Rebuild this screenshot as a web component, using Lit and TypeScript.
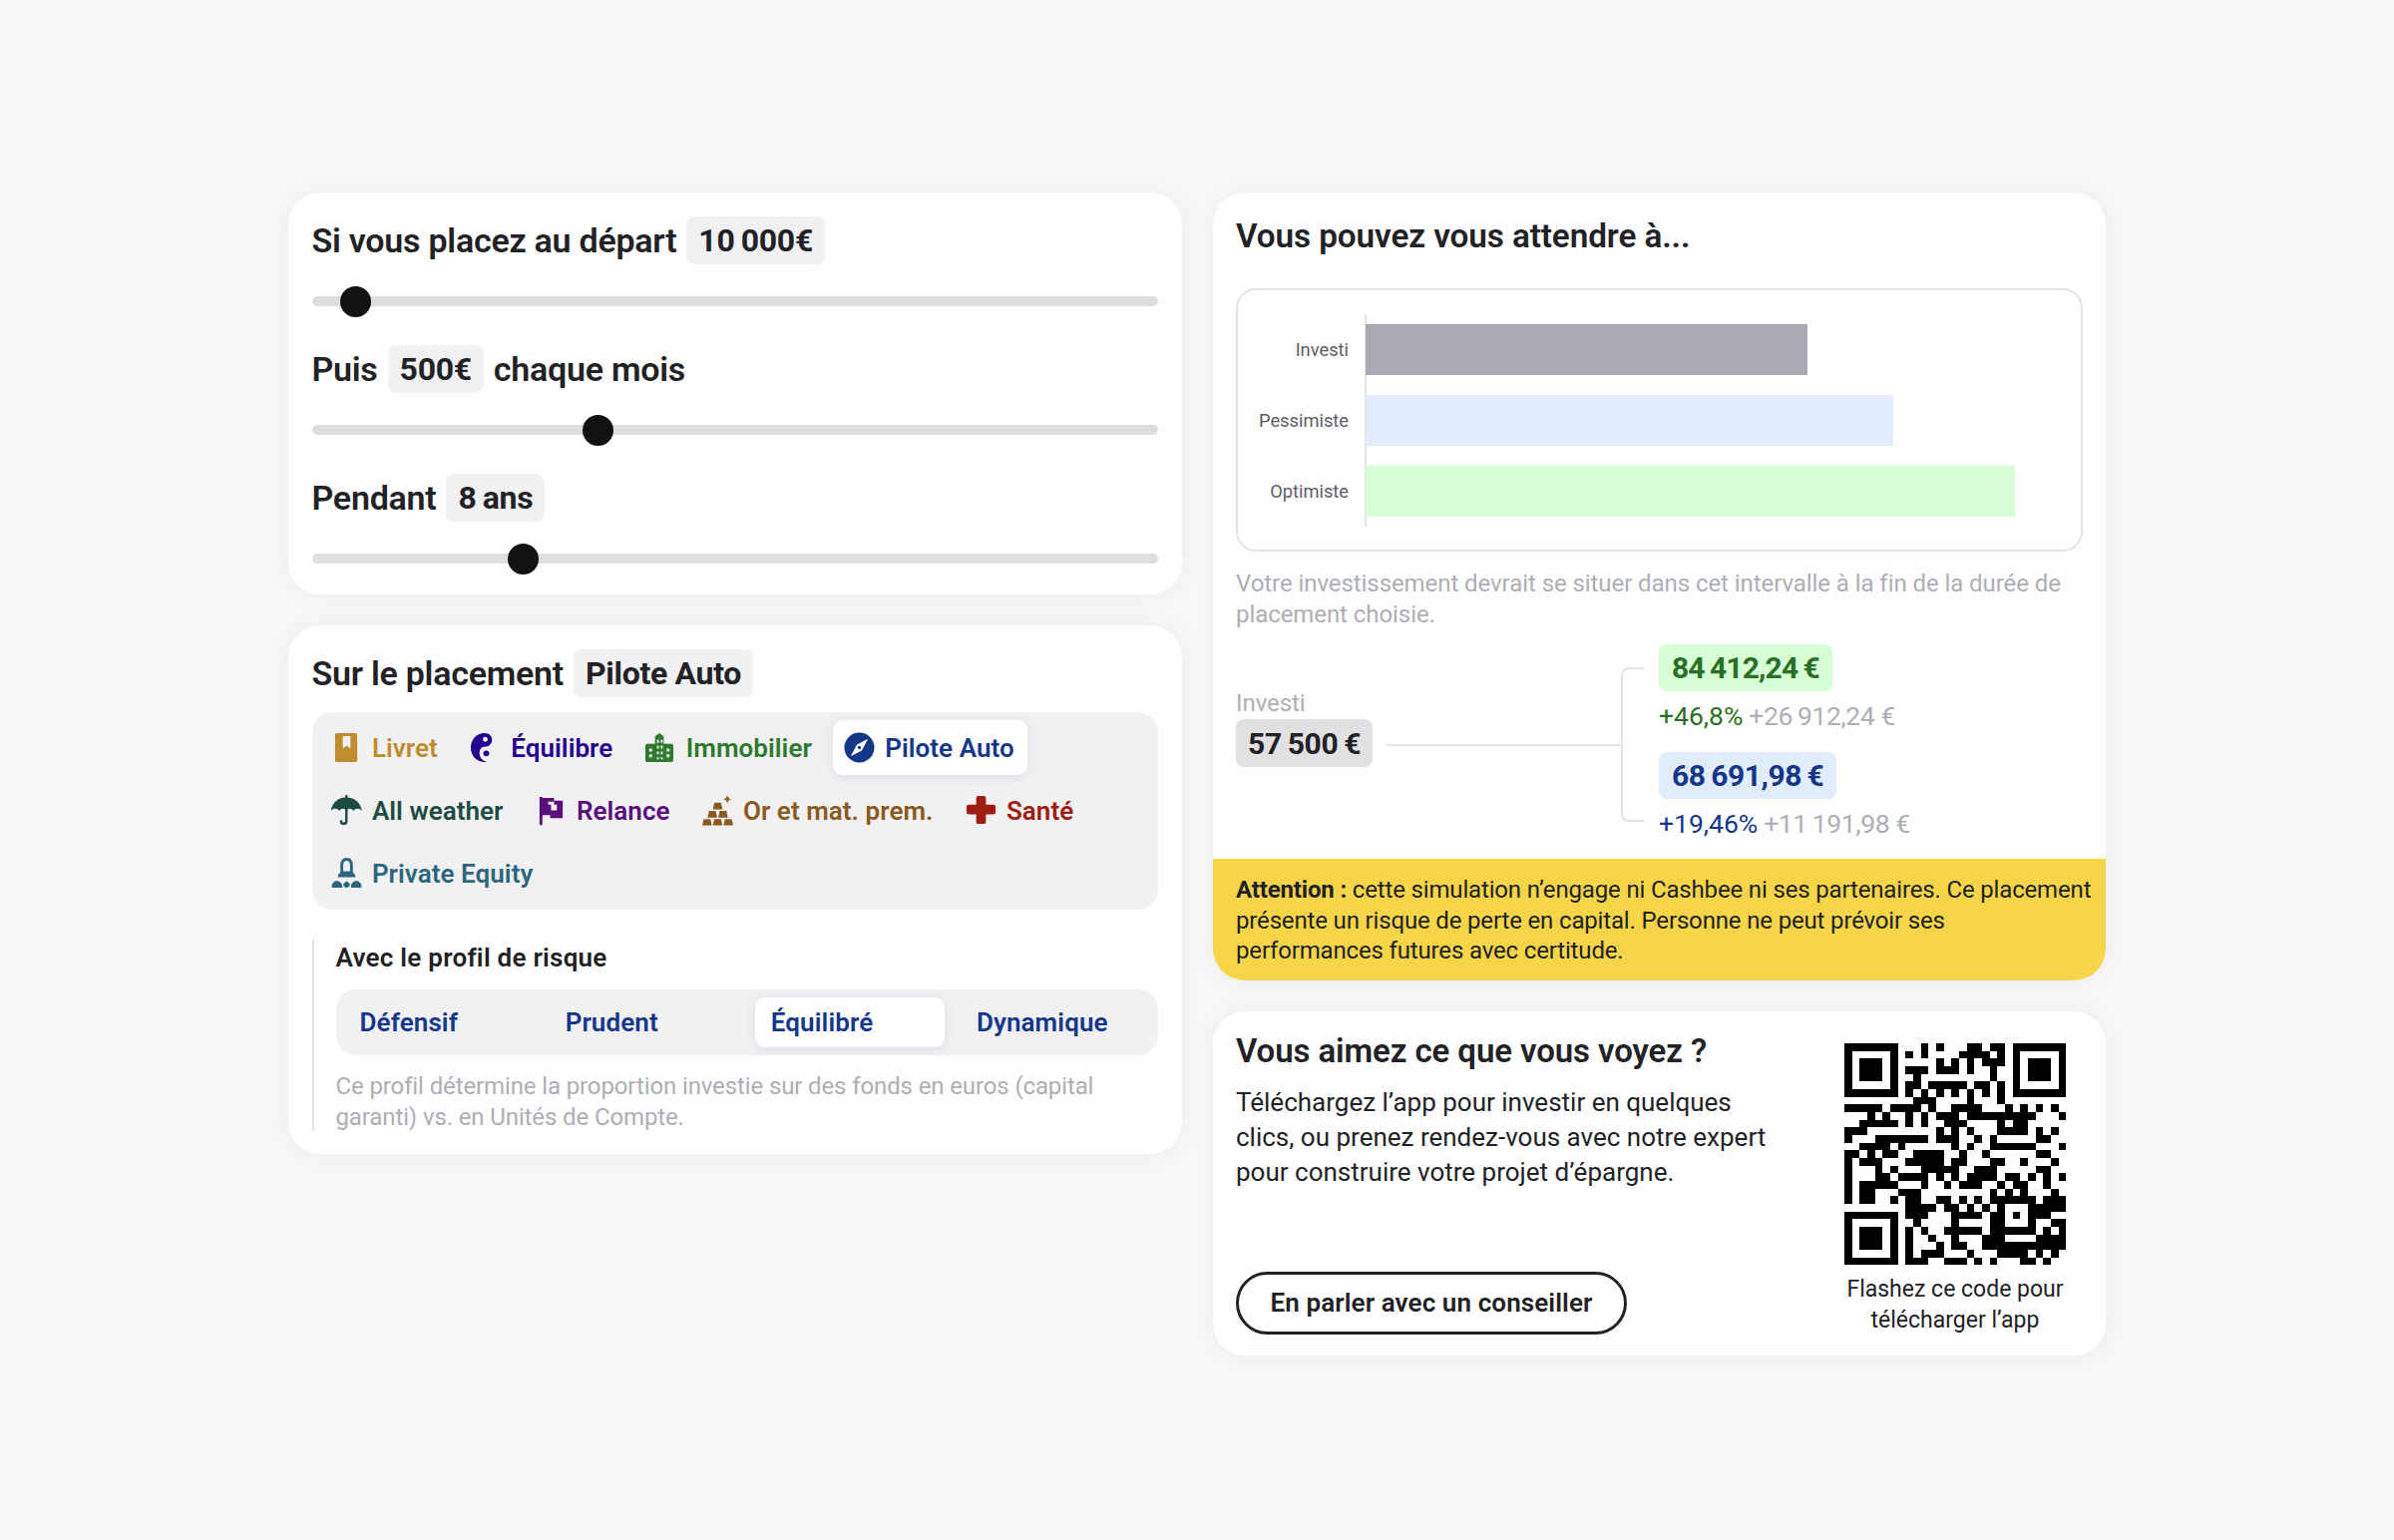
import { LitElement, html, css, svg } from "lit";
import { customElement } from "lit/decorators.js";

const QR_ROWS: number[][] = [
  [10,12,16,17,19,20],[8,10,15,16,17,18,20],[12,14,16,18,19,20],[8,9,10,12,13,14,16,19],[9,19],
  [8,9,11,12,13,14,15,17,18,20],[8,10,12,14,16,18,20],[9,10,11,16,20],
  [0,1,2,3,4,6,7,8,9,11,14,15,16,17,21,23,25,27],
  [3,5,8,10,12,13,14,16,17,18,19,20,21,22,23,24,28],
  [2,3,4,5,6,8,10,13,14,15,20,22,23],
  [0,1,2,12,14,16,20,21,22,23,25,27],
  [0,4,5,6,7,8,9,10,12,13,14,17,19,25,26],
  [2,3,4,5,7,14,16,19,20,21,22,23,24,28],
  [0,1,3,5,6,9,10,11,12,15,18,25,26],
  [0,2,3,4,8,9,10,11,12,14,15,19,20,23,27],
  [0,4,6,10,11,12,13,14,17,18,19,25,26],
  [0,4,5,7,8,9,10,12,14,16,17,18,19,21,22,24,26,28],
  [0,2,3,4,5,6,10,13,15,16,17,20,22,23,26],
  [0,2,3,7,8,9,19,21,23,27],
  [0,2,3,6,8,9,12,13,15,17,19,20,21,22,23,24,26,27,28],
  [8,9,10,11,13,14,16,18,20,24,25,26,27,28],
  [8,9,10,14,15,16,17,19,20,22,24,25,26],
  [9,14,19,20,24,27,28],
  [8,10,13,14,15,16,17,19,20,21,22,23,24,26,28],
  [8,11,14,18,19,20,25,26,27,28],
  [8,12,14,15,18,19,20,21,22,23,24,25,26,27,28],
  [8,10,11,12,16,20,21,22,23,25,27],
  [8,9,10,13,14,15,17,19,23,24,26],
];
const finder = (x: number, y: number) =>
  `M${x} ${y}h7v7h-7zM${x + 1} ${y + 1}v5h5v-5zM${x + 2} ${y + 2}h3v3h-3z`;
const qrPath =
  finder(0, 0) + finder(22, 0) + finder(0, 22) +
  QR_ROWS.map((cols, r) => cols.map((c) => `M${c} ${r}h1v1h-1z`).join("")).join("");

const ICONS = {
  livret: svg`<path fill-rule="evenodd" d="M6 1h19a2 2 0 0 1 2 2v26a2 2 0 0 1-2 2H6a2 2 0 0 1-2-2V3a2 2 0 0 1 2-2zm6 3v13l4-3 4 3V4z"/>`,
  equilibre: svg`<path fill-rule="evenodd" d="M15 1c5 0 8 3 8 7 0 4-3 7-7 7-4 0-6 3-6 7 0 4 3 8 8 9C9 32 1 26 1 16 1 8 7 1 15 1zm1 4a2.500 2.500 0 1 0 0 5 2.500 2.500 0 0 0 0-5z"/><circle cx="17" cy="22" r="3"/>`,
  immo: svg`<path fill-rule="evenodd" d="M15.500 1l4.500 3.500V12h8a2 2 0 0 1 2 2v15a2 2 0 0 1-2 2H3a2 2 0 0 1-2-2V14a2 2 0 0 1 2-2h8V4.500zM13 8v3h2V8zm4 0v3h2V8zm-4 6v3h2v-3zm4 0v3h2v-3zM5 17v3h3v-3zm18 0v3h3v-3zm-10 3v3h2v-3zm4 0v3h2v-3zM5 23v3h3v-3zm18 0v3h3v-3zm-10 3v2h2v-2zm4 0v2h2v-2z"/>`,
  compass: svg`<path fill-rule="evenodd" d="M16 .500a15.500 15.500 0 1 1 0 31 15.500 15.500 0 0 1 0-31zM25 7l-11.500 6L7 25l11.500-6zM16 14.200a1.800 1.800 0 1 0 0 3.600 1.800 1.800 0 0 0 0-3.600z"/>`,
  umbrella: svg`<path d="M15 0h2v2.500c8 .5 13.500 6 15 14-2.500-3-7-3-9 0-1.500-2.500-4.500-3-6-1.500V27a4 4 0 0 1-8 0v-1h2.500v1a1.500 1.500 0 0 0 3 0V15c-2-1.500-4.500-1-6 1.500-2-3-6.500-3-9 0 1.500-8 7-13.500 15-14z"/>`,
  flag: svg`<path fill-rule="evenodd" d="M4 2h3v28a1.500 1.500 0 0 1-3 0zm3 1h12v3h9v18H15v-3H7zm6 4v3h3v6h6v-6h-3v-3z"/>`,
  gold: svg`<path d="M12.500 8h7l1.500 7H11zM7 16.500h7l1.500 7h-10zM18 16.500h7l1.500 7h-10zM1.500 25h7l1.500 6.500H0zM12.500 25h7l1.500 6.500H11zM23.500 25h7l1.500 6.500H22zM26 0c.6 3 1.500 3.900 4.500 4.500-3 .6-3.900 1.500-4.500 4.500-.6-3-1.500-3.900-4.500-4.500C24.500 3.900 25.400 3 26 0z"/>`,
  cross: svg`<path d="M11 3a2 2 0 0 1 2-2h6a2 2 0 0 1 2 2v7h8a2 2 0 0 1 2 2v6a2 2 0 0 1-2 2h-8v8a2 2 0 0 1-2 2h-6a2 2 0 0 1-2-2v-8H3a2 2 0 0 1-2-2v-6a2 2 0 0 1 2-2h8z"/>`,
  bell: svg`<path fill-rule="evenodd" d="M16 0c4.500 0 6.500 3.500 6.500 8v7l2.500 3v2H7v-2l2.500-3V8C9.500 3.500 11.500 0 16 0zm0 3c-2.500 0-3.500 2-3.500 5v6h7V8c0-3-1-5-3.500-5z"/><path d="M1 31c-1.500-4 2-7 5-7s6 3 5.500 7zM20.500 31c-.5-4 2.500-7 5.500-7s6.500 3 5 7zM16 24l3.500 3c0 2-2 4-3.500 4s-3.500-2-3.500-4z"/>`,
};

const PRODUCTS = [
  { k: "livret", t: "Livret", c: "#bf8c2e" },
  { k: "equilibre", t: "Équilibre", c: "#25008f" },
  { k: "immo", t: "Immobilier", c: "#2f7a2d" },
  { k: "compass", t: "Pilote Auto", c: "#14378a", on: true },
  { k: "umbrella", t: "All weather", c: "#1d4d42" },
  { k: "flag", t: "Relance", c: "#5a0f7d" },
  { k: "gold", t: "Or et mat. prem.", c: "#8a5a1f" },
  { k: "cross", t: "Santé", c: "#a01d12" },
  { k: "bell", t: "Private Equity", c: "#2c677f" },
];

const BARS = [
  { l: "Investi", w: 443, c: "#a9a9b1" },
  { l: "Pessimiste", w: 529, c: "#e1ecfd" },
  { l: "Optimiste", w: 651, c: "#d7ffd6" },
];

@customElement("app-root")
export class AppRoot extends LitElement {
  static styles = css`
    :host {
      display: block;
      min-height: 1544px;
      box-sizing: border-box;
      background: #f7f7f9;
      padding: 193px 289px 0;
      font-family: Roboto, "Liberation Sans", sans-serif;
      color: #222226;
    }
    * { box-sizing: border-box; }
    .page { display: grid; grid-template-columns: 895.500px 895.500px; column-gap: 31px; align-items: start; }
    .col { display: flex; flex-direction: column; gap: 31px; }
    .card { background: #fff; border-radius: 32px; box-shadow: 0 0 24px rgba(30, 30, 50, 0.05); overflow: hidden; }
    .sliders { padding: 24px 23.500px 31px; display: flex; flex-direction: column; gap: 39px; }
    .head { display: flex; align-items: center; gap: 10px; height: 48px; font-size: 34px; letter-spacing: -0.25px; font-weight: 600; white-space: nowrap; }
    .chip { display: inline-flex; align-items: center; height: 48px; padding: 0 12px; border-radius: 8px; background: #f1f1f4; font-size: 32px; letter-spacing: -0.3px; font-weight: 700; white-space: nowrap; }
    .track { position: relative; height: 10px; margin-top: 32px; border-radius: 5px; background: #dedee0; }
    .thumb { position: absolute; top: -10.500px; width: 31px; height: 31px; margin-left: -15.500px; border-radius: 50%; background: #111; }
    .place { padding: 24px 23.500px 23px; }
    .tabs { margin-top: 15px; padding: 8px 8px 9px; background: #f1f1f4; border-radius: 20px; display: flex; flex-wrap: wrap; gap: 8px; }
    .tab { display: flex; align-items: center; gap: 10.400px; height: 55px; padding: 0 13px 0 11px; border-radius: 10px; font-size: 26px; letter-spacing: 0.05px; font-weight: 600; white-space: nowrap; }
    .tab.on { background: #fff; box-shadow: 0 2px 14px rgba(30, 30, 50, 0.08); }
    .tab svg { width: 31px; height: 31px; fill: currentColor; flex: none; }
    .risk { margin-top: 30px; padding-left: 22px; border-left: 2px solid #e4e4e7; height: 192px; }
    .risk h3 { margin: 0; font-size: 26px; letter-spacing: 0.25px; font-weight: 600; line-height: 36px; }
    .seg { margin-top: 14px; padding: 8px; height: 66px; background: #f1f1f4; border-radius: 20px; display: grid; grid-template-columns: repeat(4, 1fr); gap: 16px; }
    .seg div { display: flex; align-items: center; padding-left: 16px; border-radius: 10px; font-size: 26px; letter-spacing: 0.1px; font-weight: 600; color: #14378a; }
    .seg .on { background: #fff; box-shadow: 0 2px 14px rgba(30, 30, 50, 0.08); }
    .muted { color: #aeaeb6; font-size: 24px; line-height: 31px; letter-spacing: -0.07px; white-space: nowrap; }
    .risk .muted { margin-top: 16px; letter-spacing: -0.12px; }
    .top { padding: 24px 23.500px 20px; }
    h2 { margin: 0; font-size: 33.300px; letter-spacing: -0.1px; line-height: 40px; font-weight: 600; }
    .chart { margin-top: 32px; height: 264px; border: 2px solid #e4e4e7; border-radius: 20px; padding: 24px 0; display: grid; grid-template-columns: 127px 1fr; }
    .labels { display: flex; flex-direction: column; padding: 10px 16px 0 0; gap: 20px; }
    .labels div { height: 51px; display: flex; align-items: center; justify-content: flex-end; font-size: 18.300px; color: #5d5d66; }
    .bars { border-left: 2px solid #e4e4e7; padding: 10px 0; display: flex; flex-direction: column; gap: 20px; }
    .bars div { height: 51px; margin-left: -1px; }
    .top > .muted { margin-top: 17px; }
    .flow { display: flex; margin-top: 14px; height: 195px; align-items: flex-start; }
    .start { margin-top: 43.500px; width: 134px; flex: none; }
    .start .chip { margin-top: 0.500px; background: #e1e1e4; font-size: 30px; }
    .link { display: flex; align-items: center; margin: 23px 15px 0 16px; flex: none; }
    .line { width: 236px; height: 2px; background: #e4e4e7; }
    .bracket { width: 23px; height: 155px; border: 2px solid #e4e4e7; border-right: 0; border-radius: 8px 0 0 8px; }
    .out { display: flex; flex-direction: column; align-items: flex-start; }
    .out .chip { height: 47px; font-size: 30px; padding: 0 13px; }
    .out .chip.green { background: #d7ffd6; color: #2a6f28; letter-spacing: -0.85px; }
    .out .chip.blue { background: #e1ecfd; color: #14378a; letter-spacing: -0.45px; }
    .pct { display: flex; gap: 6px; font-size: 26.500px; line-height: 31px; margin: 9px 0 21px; white-space: nowrap; }
    .pct span:last-child { color: #aeaeb6; letter-spacing: -0.4px; }
    .warn { background: #f6d548; padding: 16px 14px 14px 23.500px; font-size: 24px; letter-spacing: -0.16px; line-height: 30.500px; white-space: nowrap; color: #222226; }
    .warn b { font-weight: 700; }
    .promo { display: flex; justify-content: space-between; padding: 20px 40px 21px 23.500px; height: 345px; }
    .promo-l { display: flex; flex-direction: column; }
    .promo h2 { font-size: 33px; }
    .promo p { margin: 14px 0 0; font-size: 26px; line-height: 35px; white-space: nowrap; }
    .btn { margin-top: auto; display: flex; align-items: center; justify-content: center; width: 392px; height: 63px; border: 3px solid #222226; border-radius: 32px; font-size: 26px; font-weight: 600; letter-spacing: 0.1px; }
    .qr { width: 222px; padding-top: 12px; display: flex; flex-direction: column; align-items: center; }
    .qr svg { width: 222.500px; height: 222.500px; display: block; flex: none; }
    .qr div { margin-top: 9px; font-size: 23px; line-height: 31px; text-align: center; white-space: nowrap; }
  `;

  render() {
    const sliders = [
      { h: html`<span>Si vous placez au départ</span><span class="chip">10&#8201;000€</span>`, v: 5.2 },
      { h: html`<span>Puis</span><span class="chip">500€</span><span>chaque mois</span>`, v: 33.8 },
      { h: html`<span>Pendant</span><span class="chip">8&#8201;ans</span>`, v: 25 },
    ];
    return html`
      <div class="page">
        <div class="col">
          <section class="card sliders">
            ${sliders.map(
              (s) => html`<div>
                <div class="head">${s.h}</div>
                <div class="track"><div class="thumb" style="left:${s.v}%"></div></div>
              </div>`
            )}
          </section>
          <section class="card place">
            <div class="head"><span>Sur le placement</span><span class="chip">Pilote Auto</span></div>
            <div class="tabs">
              ${PRODUCTS.map(
                (p) => html`<div class="tab ${p.on ? "on" : ""}" style="color:${p.c}">
                  <svg viewBox="0 0 32 32">${(ICONS as any)[p.k]}</svg><span>${p.t}</span>
                </div>`
              )}
            </div>
            <div class="risk">
              <h3>Avec le profil de risque</h3>
              <div class="seg">
                <div>Défensif</div><div>Prudent</div><div class="on">Équilibré</div><div>Dynamique</div>
              </div>
              <div class="muted">Ce profil détermine la proportion investie sur des fonds en euros (capital<br />garanti) vs. en Unités de Compte.</div>
            </div>
          </section>
        </div>
        <div class="col">
          <section class="card">
            <div class="top">
              <h2>Vous pouvez vous attendre à...</h2>
              <div class="chart">
                <div class="labels">${BARS.map((b) => html`<div>${b.l}</div>`)}</div>
                <div class="bars">${BARS.map((b) => html`<div style="width:${b.w}px;background:${b.c}"></div>`)}</div>
              </div>
              <div class="muted">Votre investissement devrait se situer dans cet intervalle à la fin de la durée de<br />placement choisie.</div>
              <div class="flow">
                <div class="start">
                  <div class="muted">Investi</div>
                  <div class="chip">57&#8201;500&#8201;€</div>
                </div>
                <div class="link"><div class="line"></div><div class="bracket"></div></div>
                <div class="out">
                  <div class="chip green">84&#8201;412,24&#8201;€</div>
                  <div class="pct" style="color:#2a6f28"><span>+46,8%</span><span>+26&#8201;912,24 €</span></div>
                  <div class="chip blue">68&#8201;691,98&#8201;€</div>
                  <div class="pct" style="color:#14378a;margin-bottom:0"><span>+19,46%</span><span>+11&#8201;191,98 €</span></div>
                </div>
              </div>
            </div>
            <div class="warn"><b>Attention :</b> cette simulation n’engage ni Cashbee ni ses partenaires. Ce placement<br />présente un risque de perte en capital. Personne ne peut prévoir ses<br />performances futures avec certitude.</div>
          </section>
          <section class="card promo">
            <div class="promo-l">
              <h2>Vous aimez ce que vous voyez ?</h2>
              <p>Téléchargez l’app pour investir en quelques<br />clics, ou prenez rendez-vous avec notre expert<br />pour construire votre projet d’épargne.</p>
              <div class="btn">En parler avec un conseiller</div>
            </div>
            <div class="qr">
              <svg viewBox="0 0 29 29" shape-rendering="crispEdges"><path fill-rule="evenodd" d="${qrPath}" /></svg>
              <div>Flashez ce code pour<br />télécharger l’app</div>
            </div>
          </section>
        </div>
      </div>
    `;
  }
}
